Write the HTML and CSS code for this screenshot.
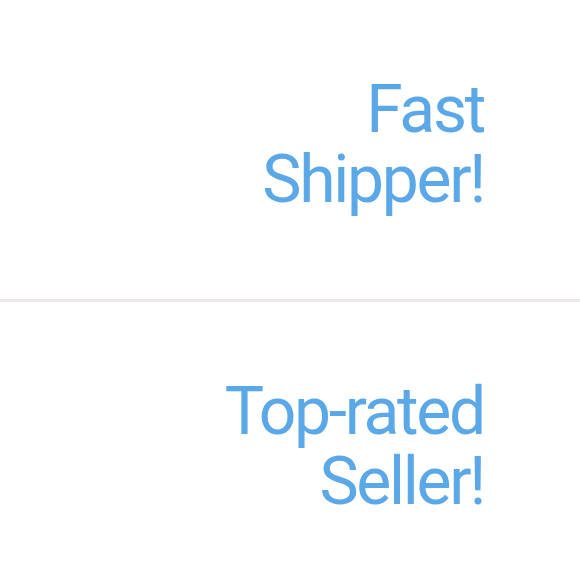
FILE: index.html
```html
<!DOCTYPE html>
<html>
<head>
<meta charset="utf-8">
<link rel="stylesheet" href="styles.css">
</head>
<body>
  <div class="list">
    <div class="row">
      <div class="label">Fast<br>Shipper!</div>
    </div>
    <div class="row">
      <div class="label">Top-rated<br>Seller!</div>
    </div>
  </div>
</body>
</html>
```
FILE: styles.css
```css
html, body {
  margin: 0;
  padding: 0;
  background: #ffffff;
}
.list {
  display: flex;
  flex-direction: column;
}
.row {
  display: flex;
  justify-content: flex-end;
  padding: 75px 96px 84px 0;
}
.row + .row {
  border-top: 3px solid #ede7e8;
}
.label {
  font-family: Roboto, "Liberation Sans", sans-serif;
  font-size: 66px;
  line-height: 70px;
  letter-spacing: -2.3px;
  color: #5aa8e7;
  text-align: right;
}
```
